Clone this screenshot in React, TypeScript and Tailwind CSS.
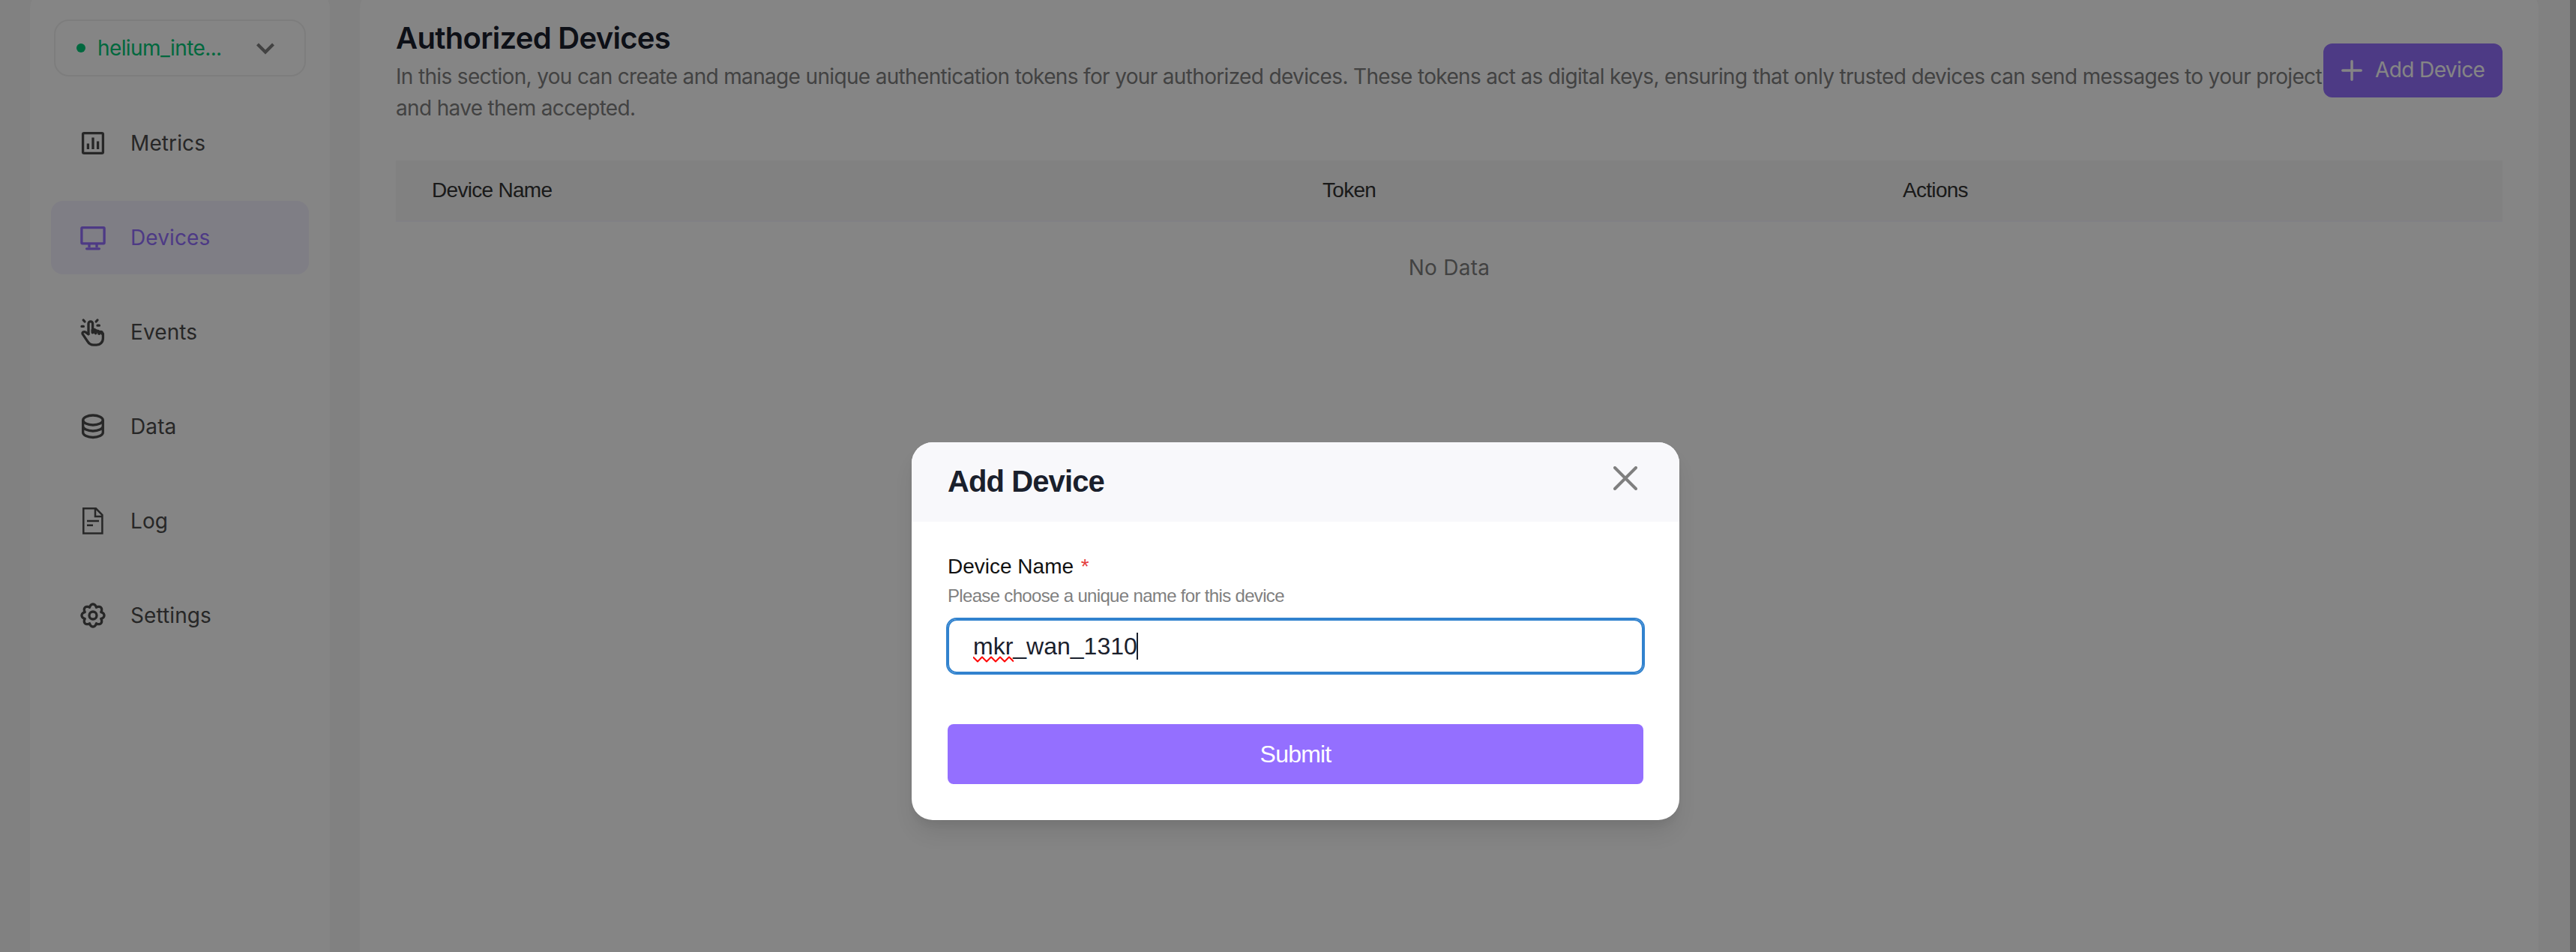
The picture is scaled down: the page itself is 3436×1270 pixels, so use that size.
import React from "react";

function MetricsIcon() {
  return (
    <svg width="40" height="40" viewBox="0 0 40 40" fill="none" stroke="currentColor" strokeWidth="3.3">
      <rect x="6.6" y="6.6" width="26.8" height="26.8" rx="1.6" />
      <path d="M13.4 20.5V28M20 12.5V28M26.6 17.5V28" />
    </svg>
  );
}

function DevicesIcon() {
  return (
    <svg width="40" height="40" viewBox="0 0 40 40" fill="none" stroke="currentColor" strokeWidth="3.3" strokeLinejoin="round">
      <rect x="4.9" y="6.6" width="30.2" height="21.2" rx="1" />
      <path d="M15 28v5M25 28v5" />
      <path d="M11.6 34.8h16.8" strokeLinecap="round" />
    </svg>
  );
}

function EventsIcon() {
  return (
    <svg width="40" height="40" viewBox="0 0 40 40" fill="none" stroke="currentColor" strokeWidth="3.3" strokeLinecap="round" strokeLinejoin="round">
      <path d="M14 22.5V8.6a2.8 2.8 0 0 1 5.6 0V19" />
      <path strokeWidth="4.2" d="M19.6 20.500v-3.200c1.900-1.200 4 0 4 1.800v2.200M24 18.800c1.900-.8 4.200.4 4.200 2v1.200M28.600 20.200c2-.6 3.500.4 4 1.800" />
      <path d="M33.400 22.500v5.700c0 5.400-4 9-8.800 9h-3.800c-4 0-6.200-1.600-8.200-5L6.200 22.600c-.8-2.200 1.600-4 4-2.400l3.800 2.600" />
      <path d="M7.200 4l1.800 2M26 4l-1.800 2M5 12.400h2.400M26 11.200h2.400" />
    </svg>
  );
}

function DataIcon() {
  return (
    <svg width="40" height="40" viewBox="0 0 40 40" fill="none" stroke="currentColor" strokeWidth="3.3">
      <ellipse cx="20" cy="11.5" rx="13.3" ry="6.5" />
      <path d="M6.700 11.500v16.500c0 3.400 6 6.500 13.300 6.500s13.300-3.100 13.300-6.500v-16.500M6.700 19.500c0 3.400 6 6.500 13.300 6.500s13.300-3.100 13.300-6.500" />
    </svg>
  );
}

function LogIcon() {
  return (
    <svg width="40" height="40" viewBox="0 0 40 40" fill="none" stroke="currentColor" strokeWidth="2.5">
      <path d="M7.300 3.300h16.600l8.500 8.700v24.500H7.300zM23 3.300v10.800h9.400M12 20h16M12 25.700h8" />
    </svg>
  );
}

/* Eight-lobed cog outline */
const gearPath =
  Array.from({ length: 96 }, (_, i) => {
    const t = (i / 96) * Math.PI * 2;
    const lobe = Math.pow(Math.abs(Math.cos(4 * t)), 0.9);
    const r = 11.6 + 3.4 * lobe;
    return `${i ? "L" : "M"}${(20 + r * Math.cos(t)).toFixed(2)} ${(20 + r * Math.sin(t)).toFixed(2)}`;
  }).join("") + "Z";

function SettingsIcon() {
  return (
    <svg width="40" height="40" viewBox="0 0 40 40" fill="none" stroke="currentColor" strokeWidth="3.3" strokeLinejoin="round">
      <path d={gearPath} />
      <circle cx="20" cy="20" r="5" />
    </svg>
  );
}

const items = [
  { label: "Metrics", icon: <MetricsIcon /> },
  { label: "Devices", icon: <DevicesIcon />, active: true },
  { label: "Events", icon: <EventsIcon /> },
  { label: "Data", icon: <DataIcon /> },
  { label: "Log", icon: <LogIcon /> },
  { label: "Settings", icon: <SettingsIcon /> },
];

function Sidebar() {
  return (
    <aside className="-mt-5 h-[1320px] w-[400px] shrink-0 rounded-[32px] bg-white px-7 pt-[46px]">
      <div className="mx-1 flex h-[76px] items-center rounded-[20px] border-2 border-[#f0f0f0] pl-7 pr-[38px] text-[#00c878]">
        <span className="size-3 rounded-full bg-current" />
        <span className="ml-4 flex-1 tracking-[-0.6px]">helium_inte...</span>
        <svg width="28" height="28" viewBox="0 0 28 28" fill="none" stroke="#7f7f7f" strokeWidth="4.2">
          <path d="M3.5 9l10.5 10.5L24.5 9" />
        </svg>
      </div>
      <nav className="mt-10 flex flex-col gap-7 tracking-[0.1px]">
        {items.map((it) => (
          <div
            key={it.label}
            className={
              it.active
                ? "flex h-[98px] items-center gap-[30px] rounded-2xl bg-[#f4f1ff] pl-9 text-[#946fff]"
                : "flex h-[98px] items-center gap-[30px] rounded-2xl pl-9 text-[#4b4b4b]"
            }
          >
            {it.icon}
            <span>{it.label}</span>
          </div>
        ))}
      </nav>
    </aside>
  );
}

function DevicesPage() {
  return (
    <main className="-mt-5 h-[1320px] min-w-0 flex-1 rounded-[32px] bg-white px-12 pt-[41px]">
      <header className="flex items-center justify-between">
        <div className="min-w-0 flex-1">
          <h1 className="text-[40px] font-semibold leading-[60px] tracking-[-0.7px] text-[#1a202c]">Authorized Devices</h1>
          <p className="whitespace-nowrap leading-[42px] tracking-[-0.66px] text-[#7f7f7f]">
            In this section, you can create and manage unique authentication tokens for your authorized devices. These tokens act as digital keys, ensuring that only trusted devices can send messages to your project
            <br />
            and have them accepted.
          </p>
        </div>
        <button className="mt-0.5 flex h-[72px] w-[239px] shrink-0 items-center rounded-xl bg-[#946fff] pl-6 text-white">
          <svg width="28" height="28" viewBox="0 0 28 28" stroke="currentColor" strokeWidth="3.5" strokeLinecap="round">
            <path d="M14 1.800v24.400M1.800 14h24.400" />
          </svg>
          <span className="-mt-0.5 ml-[17px] whitespace-nowrap tracking-[-0.6px]">Add Device</span>
        </button>
      </header>
      <div className="mt-[49px]">
        <div className="flex h-[82px] items-center border-b-2 border-[#f7f5ff] bg-[#f7f7f7] font-['Liberation_Sans',sans-serif] tracking-[-0.7px] text-[#333]">
          <span className="w-[1236px] pl-12">Device Name</span>
          <span className="w-[774px]">Token</span>
          <span>Actions</span>
        </div>
        <div className="mt-10 text-center leading-[42px] tracking-[0.25px] text-[#7f7f7f]">No Data</div>
      </div>
    </main>
  );
}

function AddDeviceModal() {
  return (
    <section className="mt-[590px] ml-5 flex h-[504px] w-[1024px] flex-col overflow-hidden rounded-[28px] bg-white font-['Liberation_Sans',sans-serif] shadow-[0_20px_30px_-6px_rgba(0,0,0,0.1),0_8px_12px_-4px_rgba(0,0,0,0.05)]">
      <div className="flex h-[106px] items-start justify-between bg-[#f8f8fb] pl-12 pr-14">
        <h2 className="mt-[22px] text-[40px] font-bold leading-[60px] tracking-[-0.9px] text-[#1a202c]">Add Device</h2>
        <svg className="mt-8" width="32" height="32" viewBox="0 0 32 32" stroke="#7f7f7f" strokeWidth="4" strokeLinecap="round">
          <path d="M2 2l28 28M30 2L2 30" />
        </svg>
      </div>
      <div className="flex flex-col px-12">
        <label className="mt-[39px] leading-[42px] text-[#111]">
          Device Name <span className="ml-[2px] text-[#e53e3e]">*</span>
        </label>
        <p className="text-[24px] leading-9 tracking-[-0.67px] text-[#7f7f7f]">Please choose a unique name for this device</p>
        <div className="mt-[13px] flex h-[72px] items-center rounded-xl border-2 border-[#3182ce] px-8 text-[32px] text-[#1a202c] ring-2 ring-[#3182ce]">
          <span>
            <span className="relative">
              mkr
              <svg className="absolute -bottom-1 left-0" width="54" height="9" viewBox="0 0 54 9" fill="none" stroke="#f00" strokeWidth="2">
                <path d="M0 1.500l6 6 6-6 6 6 6-6 6 6 6-6 6 6 6-6 6 6" strokeLinejoin="round" />
              </svg>
            </span>
            _wan_1310
          </span>
          <span className="-ml-px h-9 w-0.5 bg-[#1a202c]" />
        </div>
        <button className="mt-[68px] h-20 rounded-lg bg-[#946fff] text-[32px] tracking-[-0.8px] text-white">Submit</button>
      </div>
    </section>
  );
}

export default function App() {
  return (
    <div className="relative h-[1270px] w-[3436px] overflow-hidden bg-[#f7f7f7] font-['Inter',sans-serif] text-[28px]">
      <div className="flex h-full">
        <div className="flex min-w-0 flex-1 gap-10 pl-10 pr-[42px]">
          <Sidebar />
          <DevicesPage />
        </div>
        <div className="w-2 bg-[#bfbfbf]" />
      </div>
      <div className="absolute inset-0 flex items-start justify-center bg-black/48">
        <AddDeviceModal />
      </div>
    </div>
  );
}
